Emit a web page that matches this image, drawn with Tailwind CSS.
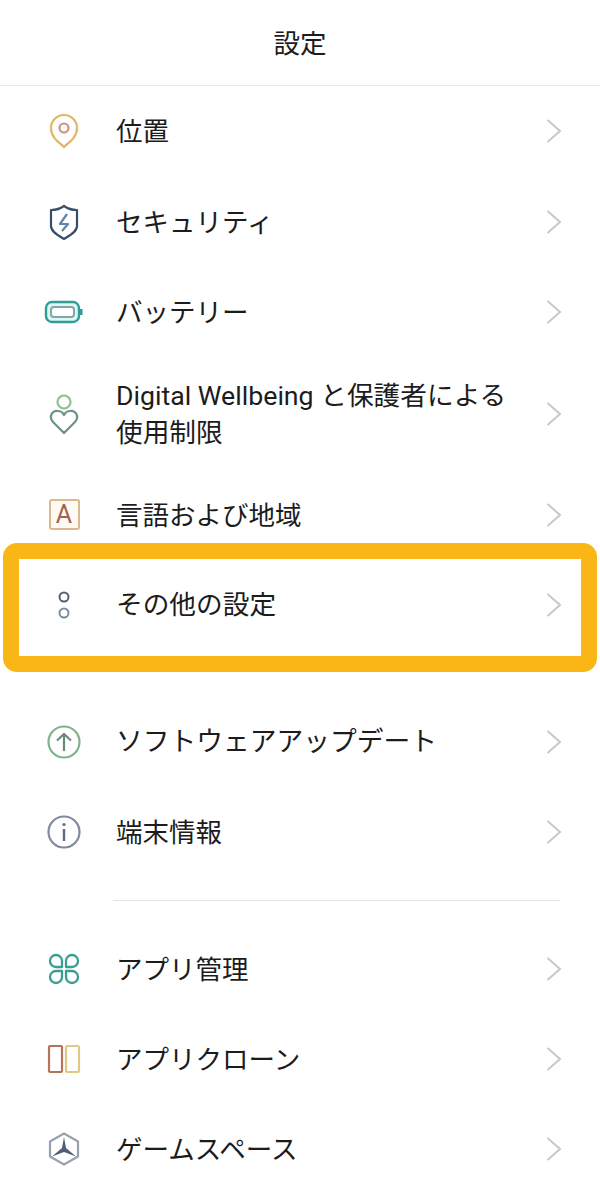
<!DOCTYPE html>
<html lang="ja">
<head>
  <meta charset="UTF-8" />
  <title>設定</title>
  <script src="https://cdn.jsdelivr.net/npm/@tailwindcss/browser@4"></script>
</head>
<body class="bg-white text-[#1c1c1c] font-['Roboto','Noto_Sans_CJK_JP',sans-serif]">
  <div class="relative w-[600px] h-[1200px] overflow-hidden">
    <header class="h-[86px] pt-[2px] flex items-center justify-center border-b border-[#e9e9e9] text-[26.5px]">設定</header>

    <a class="h-[90px] flex items-center">
      <span class="w-[116px] flex justify-center pl-[12px]">
        <svg width="36" height="40" viewBox="0 0 36 40" fill="none"><path d="M18 36 C14 32 5 27 5 17 A13 13 0 0 1 31 17 C31 27 22 32 18 36 Z" stroke="#e3b565" stroke-width="2.2"/><circle cx="18" cy="17" r="4.5" stroke="#c9947f" stroke-width="2.2"/></svg>
      </span>
      <span class="flex-1 pt-[2px] text-[26.5px]">位置</span>
      <svg class="mr-[38px]" width="16" height="24" viewBox="0 0 16 24" fill="none"><path d="M1.500 1 L14 12 L1.500 23" stroke="#c8c8c8" stroke-width="2"/></svg>
    </a>

    <a class="h-[91px] flex items-center">
      <span class="w-[116px] flex justify-center pl-[12px]">
        <svg width="36" height="40" viewBox="0 0 36 40" fill="none"><path d="M18 4 C22 7 26 8 31 8 V24 C31 30 23 34 18 37 C13 34 5 30 5 24 V8 C10 8 14 7 18 4 Z" stroke="#34506a" stroke-width="2.2" stroke-linejoin="round"/><path d="M21 12 L14 22 H22 L16 29" stroke="#5f86a8" stroke-width="2.2" stroke-linejoin="round"/></svg>
      </span>
      <span class="flex-1 pt-[2px] text-[26.5px]">セキュリティ</span>
      <svg class="mr-[38px]" width="16" height="24" viewBox="0 0 16 24" fill="none"><path d="M1.500 1 L14 12 L1.500 23" stroke="#c8c8c8" stroke-width="2"/></svg>
    </a>

    <a class="h-[90px] flex items-center">
      <span class="w-[116px] flex justify-center pl-[12px]">
        <svg width="40" height="26" viewBox="0 0 40 26" fill="none"><rect x="2" y="3" width="33" height="20" rx="6" stroke="#2f9c96" stroke-width="2.400" fill="#dff6f3"/><rect x="7" y="8" width="23" height="10" rx="3" stroke="#7fa8a4" stroke-width="2" fill="#fff"/><path d="M37 10 V16" stroke="#2f9c96" stroke-width="3"/></svg>
      </span>
      <span class="flex-1 pt-[2px] text-[26.5px]">バッテリー</span>
      <svg class="mr-[38px]" width="16" height="24" viewBox="0 0 16 24" fill="none"><path d="M1.500 1 L14 12 L1.500 23" stroke="#c8c8c8" stroke-width="2"/></svg>
    </a>

    <a class="h-[113px] flex items-center">
      <span class="w-[116px] flex justify-center pl-[12px]">
        <svg width="36" height="46" viewBox="0 0 36 46" fill="none"><circle cx="18" cy="11" r="6.500" stroke="#8cc28c" stroke-width="2.200"/><path d="M18 42 L7 31 C2 25 7 19 12 20 C15 20 17 22 18 24 C19 22 21 20 24 20 C29 19 34 25 29 31 Z" stroke="#6b9486" stroke-width="2.200" stroke-linejoin="round"/></svg>
      </span>
      <span class="flex-1 pt-[2px] text-[26.7px] leading-[37px]">Digital Wellbeing と保護者による<br>使用制限</span>
      <svg class="mr-[38px]" width="16" height="24" viewBox="0 0 16 24" fill="none"><path d="M1.500 1 L14 12 L1.500 23" stroke="#c8c8c8" stroke-width="2"/></svg>
    </a>

    <a class="h-[89px] flex items-center">
      <span class="w-[116px] flex justify-center pl-[12px]">
        <span class="w-[31px] h-[31px] flex items-center justify-center rounded-[3px] border-2 border-[#dcb98c] bg-[#fffaf3] text-[25px] leading-none text-[#a5614f]">A</span>
      </span>
      <span class="flex-1 pt-[2px] text-[26.5px]">言語および地域</span>
      <svg class="mr-[38px]" width="16" height="24" viewBox="0 0 16 24" fill="none"><path d="M1.500 1 L14 12 L1.500 23" stroke="#c8c8c8" stroke-width="2"/></svg>
    </a>

    <a class="h-[91px] flex items-center">
      <span class="w-[116px] flex justify-center pl-[12px]">
        <svg width="20" height="32" viewBox="0 0 20 32" fill="none"><circle cx="10" cy="8" r="4.500" stroke="#566070" stroke-width="2"/><circle cx="10" cy="24" r="4.500" stroke="#7b8ba0" stroke-width="2"/></svg>
      </span>
      <span class="flex-1 pt-[2px] text-[26.7px]">その他の設定</span>
      <svg class="mr-[38px]" width="16" height="24" viewBox="0 0 16 24" fill="none"><path d="M1.500 1 L14 12 L1.500 23" stroke="#c8c8c8" stroke-width="2"/></svg>
    </a>

    <a class="mt-[46px] h-[91px] flex items-center">
      <span class="w-[116px] flex justify-center pl-[12px]">
        <svg width="36" height="36" viewBox="0 0 36 36" fill="none"><circle cx="18" cy="18" r="15.500" stroke="#7fb48a" stroke-width="2.200"/><path d="M18 27 V10 M11 16.500 L18 10 L25 16.500" stroke="#6c8a78" stroke-width="2.200"/></svg>
      </span>
      <span class="flex-1 pt-[2px] text-[26.75px]">ソフトウェアアップデート</span>
      <svg class="mr-[38px]" width="16" height="24" viewBox="0 0 16 24" fill="none"><path d="M1.500 1 L14 12 L1.500 23" stroke="#c8c8c8" stroke-width="2"/></svg>
    </a>

    <a class="h-[90px] flex items-center">
      <span class="w-[116px] flex justify-center pl-[12px]">
        <svg width="36" height="36" viewBox="0 0 36 36" fill="none"><circle cx="18" cy="18" r="15.500" stroke="#7f8a9c" stroke-width="2.200"/><path d="M18 15 V27" stroke="#5f6b7d" stroke-width="2.400"/><circle cx="18" cy="10.500" r="1.600" fill="#5f6b7d"/></svg>
      </span>
      <span class="flex-1 pt-[2px] text-[26.5px]">端末情報</span>
      <svg class="mr-[38px]" width="16" height="24" viewBox="0 0 16 24" fill="none"><path d="M1.500 1 L14 12 L1.500 23" stroke="#c8c8c8" stroke-width="2"/></svg>
    </a>

    <div class="mt-[23px] mb-[22px] ml-[113px] mr-[40px] border-t border-[#e4e4e4]"></div>

    <a class="h-[91px] flex items-center">
      <span class="w-[116px] flex justify-center pl-[12px]">
        <svg width="32" height="32" viewBox="0 0 32 32" fill="none" stroke="#3a9c94" stroke-width="2.300" stroke-linejoin="round"><path d="M14 12.500 V14 H8 A6 6 0 1 1 14 8 Z"/><path d="M18 12.500 V8 A6 6 0 1 1 24 14 H18 Z"/><path d="M18 19.500 V18 H24 A6 6 0 1 1 18 24 Z"/><path d="M14 19.500 V24 A6 6 0 1 1 8 18 H14 Z"/></svg>
      </span>
      <span class="flex-1 pt-[2px] text-[26.5px]">アプリ管理</span>
      <svg class="mr-[38px]" width="16" height="24" viewBox="0 0 16 24" fill="none"><path d="M1.500 1 L14 12 L1.500 23" stroke="#c8c8c8" stroke-width="2"/></svg>
    </a>

    <a class="h-[90px] flex items-center">
      <span class="w-[116px] flex justify-center pl-[12px]">
        <svg width="36" height="30" viewBox="0 0 36 30" fill="none"><rect x="3" y="2" width="13" height="26" rx="1" stroke="#b5735a" stroke-width="2.200"/><rect x="20" y="2" width="13" height="26" rx="1" stroke="#e3c787" stroke-width="2.200"/></svg>
      </span>
      <span class="flex-1 pt-[2px] text-[26.5px]">アプリクローン</span>
      <svg class="mr-[38px]" width="16" height="24" viewBox="0 0 16 24" fill="none"><path d="M1.500 1 L14 12 L1.500 23" stroke="#c8c8c8" stroke-width="2"/></svg>
    </a>

    <a class="h-[90px] flex items-center">
      <span class="w-[116px] flex justify-center pl-[12px]">
        <svg width="36" height="36" viewBox="0 0 36 36" fill="none"><path d="M18 2.500 L32 10.500 V25.500 L18 33.500 L4 25.500 V10.500 Z" stroke="#9aa1ae" stroke-width="2.200" stroke-linejoin="round"/><path d="M18 6 L20 17 L30 25.500 L18 21 L6 25.500 L16 17 Z" fill="#4e5d78"/></svg>
      </span>
      <span class="flex-1 pt-[2px] text-[26.5px]">ゲームスペース</span>
      <svg class="mr-[38px]" width="16" height="24" viewBox="0 0 16 24" fill="none"><path d="M1.500 1 L14 12 L1.500 23" stroke="#c8c8c8" stroke-width="2"/></svg>
    </a>

    <!-- highlight around その他の設定 -->
    <div class="absolute left-[3px] top-[543px] w-[594px] h-[129px] border-[16px] border-[#fab616] rounded-[14px]"></div>
  </div>
</body>
</html>
